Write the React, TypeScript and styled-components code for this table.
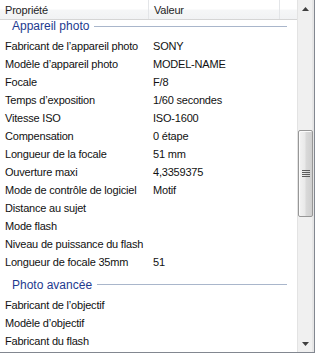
import React from 'react';
import styled, {createGlobalStyle} from 'styled-components';

type Row = [string, string];
type Group = {title: string; rows: Row[]};

const groups: Group[] = [
    {
        title: 'Appareil photo',
        rows: [
            ['Fabricant de l’appareil photo', 'SONY'],
            ['Modèle d’appareil photo', 'MODEL-NAME'],
            ['Focale', 'F/8'],
            ['Temps d’exposition', '1/60 secondes'],
            ['Vitesse ISO', 'ISO-1600'],
            ['Compensation', '0 étape'],
            ['Longueur de la focale', '51 mm'],
            ['Ouverture maxi', '4,3359375'],
            ['Mode de contrôle de logiciel', 'Motif'],
            ['Distance au sujet', ''],
            ['Mode flash', ''],
            ['Niveau de puissance du flash', ''],
            ['Longueur de focale 35mm', '51'],
        ],
    },
    {
        title: 'Photo avancée',
        rows: [
            ['Fabricant de l’objectif', ''],
            ['Modèle d’objectif', ''],
            ['Fabricant du flash', ''],
        ],
    },
];

// where the thumb sits in its track (the list is scrolled down a little)
const THUMB_TOP = 113;
const THUMB_HEIGHT = 87;

const GlobalStyle = createGlobalStyle`
    body {
        margin: 0;
        background: #ffffff;
        font-family: "Liberation Sans", Arial, sans-serif;
    }
`;

const Frame = styled.div`
    display: flex;
    width: 315px;
    height: 353px;
    box-sizing: border-box;
    border-right: 1px solid #828790;
    border-bottom: 1px solid #828790;
    background: #ffffff;
    overflow: hidden;
`;

const Main = styled.div`
    flex: 1;
    display: flex;
    flex-direction: column;
    min-width: 0;
`;

const Header = styled.div`
    display: grid;
    grid-template-columns: 149px 131px 1fr;
    height: 20px;
    box-sizing: border-box;
    border-bottom: 1px solid #d5d5d5;
    background: linear-gradient(to bottom, #ffffff 0%, #ffffff 45%, #f5f6f7 55%, #f1f2f4 100%);
    flex-shrink: 0;
`;

const HeaderCell = styled.div`
    display: flex;
    align-items: center;
    padding-left: 5px;
    border-right: 1px solid #e3e5e8;
    font-size: 11px;
    letter-spacing: -0.2px;
    color: #1e1e1e;
    &:last-child {
        border-right: none;
    }
`;

const Viewport = styled.div`
    flex: 1;
    overflow: hidden;
`;

// the first group's header is partly scrolled under the column header
const GroupHeader = styled.div<{$clipped?: boolean}>`
    display: flex;
    align-items: center;
    gap: 5px;
    height: ${p => (p.$clipped ? 17 : 25)}px;
    box-sizing: border-box;
    padding: ${p => (p.$clipped ? '0 10px 5px 12px' : '2px 10px 0 12px')};
    font-size: 12px;
    color: #1e3a8f;
    white-space: nowrap;
    &::after {
        content: '';
        flex: 1;
        height: 1px;
        background: #a9b6cb;
    }
`;

const ItemRow = styled.div`
    display: grid;
    grid-template-columns: 148px 1fr;
    height: 18px;
    align-items: center;
    font-size: 11px;
    letter-spacing: -0.2px;
    color: #111111;
    white-space: nowrap;
`;

const Cell = styled.span`
    padding-left: 5px;
    overflow: hidden;
`;

const ScrollBar = styled.div`
    display: flex;
    flex-direction: column;
    width: 17px;
    flex-shrink: 0;
    background: linear-gradient(to right, #e3e3e3 0, #e3e3e3 1px, #f0f0f0 1px, #f0f0f0 15px, #e6e6e6 15px);
`;

const ArrowButton = styled.div`
    display: flex;
    align-items: center;
    justify-content: center;
    height: 17px;
    flex-shrink: 0;
`;

const Track = styled.div`
    flex: 1;
    padding: 0 1px;
`;

const Thumb = styled.div`
    display: flex;
    align-items: center;
    justify-content: center;
    box-sizing: border-box;
    border: 1px solid #979797;
    border-radius: 2px;
    background: linear-gradient(to right, #f3f3f3 0%, #e9e9e9 45%, #d9d9d9 55%, #cfcfcf 100%);
    box-shadow: inset 1px 1px 0 #fbfbfb;
`;

const Arrow = ({up}: {up?: boolean}) => (
    <svg width='7' height='4' viewBox='0 0 7 4'>
        <path d={up ? 'M3.5 0 L7 4 L0 4 Z' : 'M0 0 L7 0 L3.5 4 Z'} fill='#3f3f3f' />
    </svg>
);

const Grip = () => (
    <svg width='8' height='8' viewBox='0 0 8 8'>
        {[0, 2, 4, 6].map(y => (
            <rect key={y} x='0' y={y} width='8' height='1' fill='#5c5c5c' />
        ))}
    </svg>
);

export default function App() {
    return (
        <>
            <GlobalStyle />
            <Frame>
                <Main>
                    <Header>
                        <HeaderCell>Propriété</HeaderCell>
                        <HeaderCell>Valeur</HeaderCell>
                        <HeaderCell />
                    </Header>
                    <Viewport>
                        {groups.map((group, index) => (
                            <div key={group.title}>
                                <GroupHeader $clipped={index === 0}>{group.title}</GroupHeader>
                                {group.rows.map(([name, value]) => (
                                    <ItemRow key={name}>
                                        <Cell>{name}</Cell>
                                        <Cell>{value}</Cell>
                                    </ItemRow>
                                ))}
                            </div>
                        ))}
                    </Viewport>
                </Main>
                <ScrollBar>
                    <ArrowButton>
                        <Arrow up />
                    </ArrowButton>
                    <Track>
                        <Thumb style={{marginTop: THUMB_TOP, height: THUMB_HEIGHT}}>
                            <Grip />
                        </Thumb>
                    </Track>
                    <ArrowButton>
                        <Arrow />
                    </ArrowButton>
                </ScrollBar>
            </Frame>
        </>
    );
}
